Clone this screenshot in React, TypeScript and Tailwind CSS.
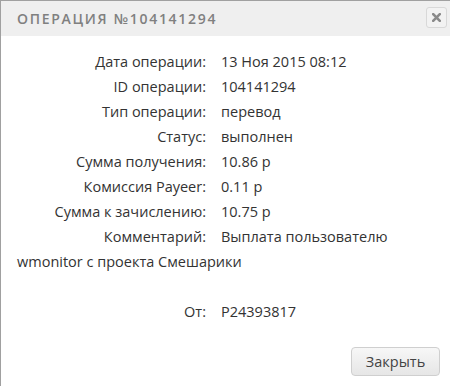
const rows: [string, string][] = [
  ["Дата операции:", "13 Ноя 2015 08:12"],
  ["ID операции:", "104141294"],
  ["Тип операции:", "перевод"],
  ["Статус:", "выполнен"],
  ["Сумма получения:", "10.86 р"],
  ["Комиссия Payeer:", "0.11 р"],
  ["Сумма к зачислению:", "10.75 р"],
  ["Комментарий:", "Выплата пользователю wmonitor с проекта Смешарики"],
];

const Row = ({ label, value }: { label: string; value: string }) => (
  <div>
    <span className="inline-block w-[189px] text-right">{label}</span>
    <span className="ml-[15px]">{value}</span>
  </div>
);

export default function App() {
  return (
    <div
      className="w-[450px] h-[386px] bg-white border-l border-t border-[#a0a0a0] flex flex-col text-[#333]"
      style={{ fontFamily: "'Open Sans', sans-serif" }}
    >
      <div className="h-[35px] bg-[#efefef] flex items-center justify-between pl-4 pr-[3px]">
        <span className="text-[14px] font-semibold tracking-[1.7px] text-[#808080]">
          ОПЕРАЦИЯ №104141294
        </span>
        <button className="w-[21px] h-[21px] mb-[2px] rounded-[3px] border border-[#d8d8d8] bg-[#f2f2f2] flex items-center justify-center">
          <svg width="9" height="9" viewBox="0 0 9 9">
            <path d="M1.2 1.2 L7.8 7.8 M7.8 1.2 L1.2 7.8" stroke="#8a8a8a" strokeWidth="2.6" strokeLinecap="square" />
          </svg>
        </button>
      </div>

      <div className="flex-1 pl-4 pr-4 pt-[13px] text-[14.5px] leading-[25px]">
        {rows.map(([l, v]) => (
          <Row key={l} label={l} value={v} />
        ))}
        <div className="h-[25px]" />
        <Row label="От:" value="P24393817" />
      </div>

      <div className="flex justify-end pr-[10px] pb-[10px]">
        <button className="w-[89px] h-[29px] rounded-[4px] border border-[#cfcfcf] bg-gradient-to-b from-[#f7f7f7] to-[#e6e6e6] text-[14.5px] text-[#444]">
          Закрыть
        </button>
      </div>
    </div>
  );
}
